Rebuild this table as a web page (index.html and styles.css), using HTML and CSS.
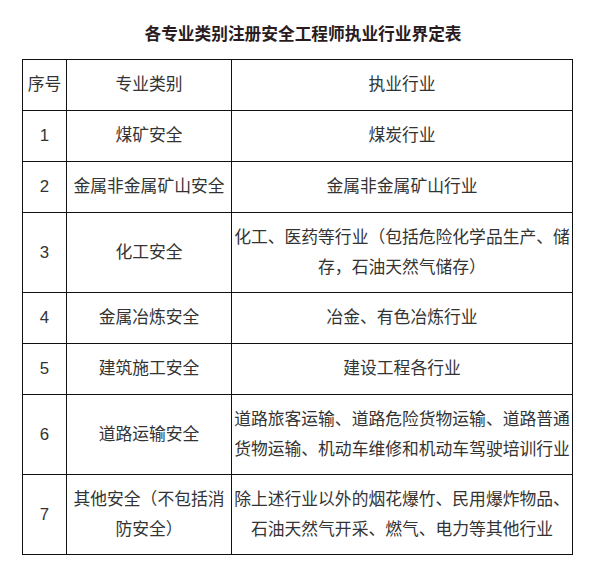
FILE: index.html
```html
<!DOCTYPE html>
<html lang="zh-CN">
<head>
<meta charset="utf-8">
<title>各专业类别注册安全工程师执业行业界定表</title>
<link rel="stylesheet" href="styles.css">
</head>
<body>
<div class="page">
  <h1 class="title">各专业类别注册安全工程师执业行业界定表</h1>
  <table class="grid">
    <colgroup>
      <col class="c-no">
      <col class="c-type">
      <col class="c-ind">
    </colgroup>
    <tr class="r1"><td>序号</td><td>专业类别</td><td>执业行业</td></tr>
    <tr class="r1"><td>1</td><td>煤矿安全</td><td>煤炭行业</td></tr>
    <tr class="r1"><td>2</td><td>金属非金属矿山安全</td><td>金属非金属矿山行业</td></tr>
    <tr class="r2"><td>3</td><td>化工安全</td><td>化工、医药等行业（包括危险化学品生产、储<br>存，石油天然气储存）</td></tr>
    <tr class="r1"><td>4</td><td>金属冶炼安全</td><td>冶金、有色冶炼行业</td></tr>
    <tr class="r1"><td>5</td><td>建筑施工安全</td><td>建设工程各行业</td></tr>
    <tr class="r2"><td>6</td><td>道路运输安全</td><td>道路旅客运输、道路危险货物运输、道路普通<br>货物运输、机动车维修和机动车驾驶培训行业</td></tr>
    <tr class="r2"><td>7</td><td>其他安全（不包括消<br>防安全）</td><td>除上述行业以外的烟花爆竹、民用爆炸物品、<br>石油天然气开采、燃气、电力等其他行业</td></tr>
  </table>
</div>
</body>
</html>
```

FILE: styles.css
```css
html, body {
  margin: 0;
  padding: 0;
  background: #ffffff;
}

.page {
  width: 596px;
  padding-top: 18px;
  font-family: "Liberation Sans", "Noto Sans CJK SC", sans-serif;
}

.title {
  margin: 0 0 11px 0;
  text-align: center;
  font-family: "Noto Sans CJK SC", sans-serif;
  font-size: 16.7px;
  line-height: 30px;
  font-weight: 700;
  color: #2a1c1e;
  padding-left: 10px;
}

.grid {
  margin-left: 22px;
  width: 550px;
  table-layout: fixed;
  border-collapse: collapse;
}

.c-no { width: 44px; }
.c-type { width: 165px; }
.c-ind { width: 341px; }

.grid td {
  border: 1px solid #111111;
  padding: 0;
  text-align: center;
  vertical-align: middle;
  font-size: 16.8px;
  line-height: 30px;
  color: #333333;
  white-space: nowrap;
  overflow: hidden;
}

.r1 { height: 51px; }
.r2 { height: 80px; }
```
